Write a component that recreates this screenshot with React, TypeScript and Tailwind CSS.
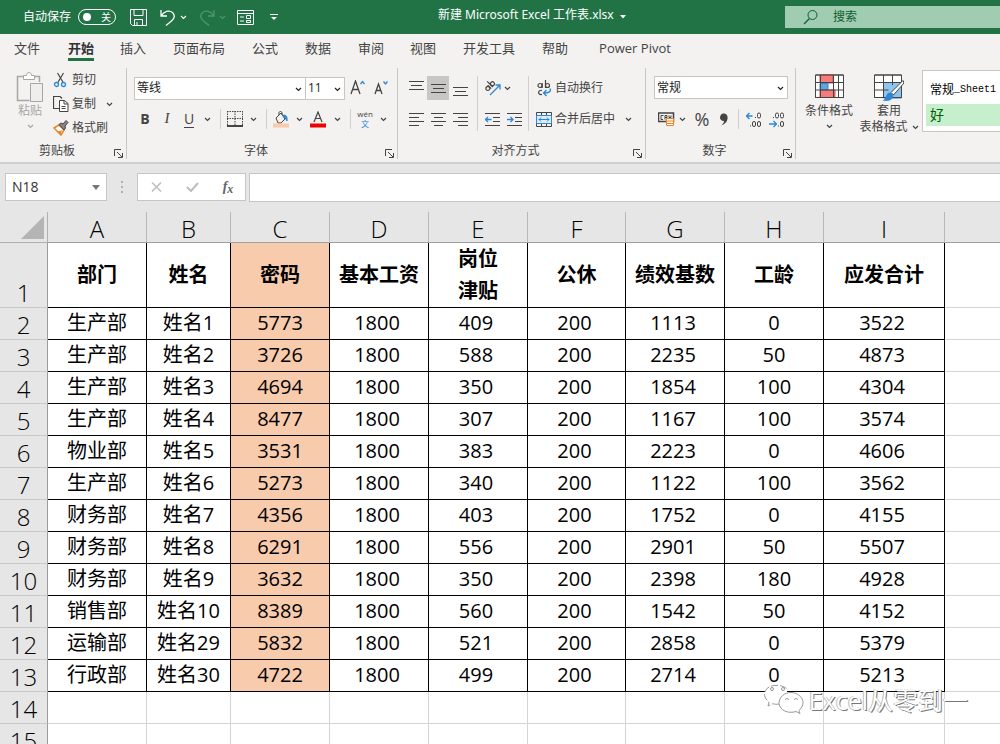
import clsx from 'clsx';
import type { ReactNode } from 'react';

interface Column {
  id: string;
  title: string[];
  width: string;
  align?: string;
}

const columns: Column[] = [
  { id: 'A', title: ['部门'], width: 'w-[99px]' },
  { id: 'B', title: ['姓名'], width: 'w-[84px]' },
  { id: 'C', title: ['密码'], width: 'w-[99px]' },
  { id: 'D', title: ['基本工资'], width: 'w-[99px]', align: 'pr-1' },
  { id: 'E', title: ['岗位', '津贴'], width: 'w-[99px]', align: 'pr-1' },
  { id: 'F', title: ['公休'], width: 'w-[98px]', align: 'pr-1' },
  { id: 'G', title: ['绩效基数'], width: 'w-[99px]', align: 'pr-1' },
  { id: 'H', title: ['工龄'], width: 'w-[99px]' },
  { id: 'I', title: ['应发合计'], width: 'w-[121px]', align: 'pr-1' },
];

const rows: string[][] = [
  ['生产部', '姓名1', '5773', '1800', '409', '200', '1113', '0', '3522'],
  ['生产部', '姓名2', '3726', '1800', '588', '200', '2235', '50', '4873'],
  ['生产部', '姓名3', '4694', '1800', '350', '200', '1854', '100', '4304'],
  ['生产部', '姓名4', '8477', '1800', '307', '200', '1167', '100', '3574'],
  ['物业部', '姓名5', '3531', '1800', '383', '200', '2223', '0', '4606'],
  ['生产部', '姓名6', '5273', '1800', '340', '200', '1122', '100', '3562'],
  ['财务部', '姓名7', '4356', '1800', '403', '200', '1752', '0', '4155'],
  ['财务部', '姓名8', '6291', '1800', '556', '200', '2901', '50', '5507'],
  ['财务部', '姓名9', '3632', '1800', '350', '200', '2398', '180', '4928'],
  ['销售部', '姓名10', '8389', '1800', '560', '200', '1542', '50', '4152'],
  ['运输部', '姓名29', '5832', '1800', '521', '200', '2858', '0', '5379'],
  ['行政部', '姓名30', '4722', '1800', '499', '200', '2714', '0', '5213'],
];

const tabs = [
  { label: '文件', width: 'w-[54px]' },
  { label: '开始', width: 'w-[54px]' },
  { label: '插入', width: 'w-[50px]' },
  { label: '页面布局', width: 'w-[82px]' },
  { label: '公式', width: 'w-[50px]' },
  { label: '数据', width: 'w-[56px]' },
  { label: '审阅', width: 'w-[50px]' },
  { label: '视图', width: 'w-[54px]' },
  { label: '开发工具', width: 'w-[78px]' },
  { label: '帮助', width: 'w-[54px]' },
  { label: 'Power Pivot', width: 'w-[106px]' },
];

function Icon({
  w,
  h,
  className,
  children,
}: {
  w: number;
  h: number;
  className?: string;
  children: ReactNode;
}) {
  return (
    <svg
      width={w}
      height={h}
      viewBox={`0 0 ${w} ${h}`}
      fill="none"
      stroke="currentColor"
      className={clsx('shrink-0', className)}
      aria-hidden="true"
    >
      {children}
    </svg>
  );
}

function Chevron({ className }: { className?: string }) {
  return (
    <Icon w={7} h={5} className={className}>
      <path d="M1 1l2.5 2.5L6 1" strokeWidth="1.2" />
    </Icon>
  );
}

function Tool({
  label,
  width,
  className,
  children,
}: {
  label: string;
  width: string;
  className?: string;
  children: ReactNode;
}) {
  return (
    <button
      type="button"
      aria-label={label}
      className={clsx(
        'flex h-6 shrink-0 items-center justify-center',
        width,
        className,
      )}
    >
      {children}
    </button>
  );
}

function More({ width = 'w-3' }: { width?: string }) {
  return (
    <Tool label="更多选项" width={width}>
      <Chevron />
    </Tool>
  );
}

function Divider() {
  return <span className="h-5 w-px shrink-0 bg-[#d2d0ce]" />;
}

function Group({
  label,
  width,
  children,
}: {
  label: string;
  width: string;
  children: ReactNode;
}) {
  return (
    <section
      aria-label={label}
      className={clsx(
        'flex shrink-0 flex-col border-r border-[#c8c6c4]',
        width,
      )}
    >
      <div className="flex-1">{children}</div>
      <div className="flex h-4 items-center pr-[3px]">
        <span className="flex-1 text-center leading-4">{label}</span>
        <button type="button" aria-label={`${label}设置`} className="pt-1">
          <Icon w={9} h={9}>
            <path d="M.5 7V.5H7M3 3l5 5M8.5 4v4.500H4" />
          </Icon>
        </button>
      </div>
    </section>
  );
}

function Combo({
  label,
  value,
  width,
}: {
  label: string;
  value: string;
  width: string;
}) {
  return (
    <label
      className={clsx(
        'relative flex h-[23px] shrink-0 border border-[#c8c6c4] bg-white text-[#222]',
        width,
      )}
    >
      <span className="sr-only">{label}</span>
      <select
        defaultValue={value}
        className="h-full w-full appearance-none bg-transparent pl-[2px] leading-5 outline-none"
      >
        <option>{value}</option>
      </select>
      <Chevron className="pointer-events-none absolute right-[3px] top-[9px]" />
    </label>
  );
}

function TitleBar() {
  return (
    <header className="flex h-[34px] shrink-0 items-center bg-[#217346] text-xs text-white">
      <div className="flex w-[438px] shrink-0 items-center pl-[23px]">
        <label htmlFor="autosave" className="leading-4">
          自动保存
        </label>
        <button
          id="autosave"
          type="button"
          role="switch"
          aria-checked="false"
          className="ml-[7px] flex h-4 w-[38px] items-center justify-between rounded-full border border-white px-1"
        >
          <span className="size-2 rounded-full bg-white" />
          <span className="text-[10px] leading-[14px]">关</span>
        </button>
        <button type="button" aria-label="保存" className="ml-[14px]">
          <Icon w={17} h={17}>
            <path d="M.5.500h16v16h-14l-2-2zM4 .5v6h9v-6M4.500 16.500v-6h8v6M7 16v-3" />
          </Icon>
        </button>
        <button type="button" aria-label="撤消" className="ml-[13px]">
          <Icon w={16} h={17}>
            <path
              d="M1 1v6h6M1.300 6.700C4 2.500 9 .5 12.500 3.500c3 3 2 6-1 8.500L6 16.500"
              strokeWidth="1.300"
            />
          </Icon>
        </button>
        <Chevron className="ml-1" />
        <button
          type="button"
          aria-label="恢复"
          className="ml-3 text-[#4f9570]"
        >
          <Icon w={16} h={17}>
            <path
              d="M15 1v6H9M14.700 6.700C12 2.500 7 .5 3.500 3.500c-3 3-2 6 1 8.500L10 16.500"
              strokeWidth="1.300"
            />
          </Icon>
        </button>
        <Chevron className="ml-1 text-[#4f9570]" />
        <button type="button" aria-label="窗体" className="ml-[11px]">
          <Icon w={17} h={15}>
            <path d="M.5.500h16v14H.5zM.5 3.500h16M3 7h4M3 11h4M9.500 5.500h4v3h-4zM9.500 10.500h4v2h-4z" />
          </Icon>
        </button>
        <button type="button" aria-label="自定义工具栏" className="ml-4">
          <Icon w={8} h={7}>
            <path d="M0 .500h8" />
            <path d="M1 3h6L4 6z" fill="currentColor" stroke="none" />
          </Icon>
        </button>
      </div>
      <h1 className="pb-1 font-['Noto_Sans','Noto_Sans_CJK_SC',sans-serif] font-normal leading-5">
        新建 Microsoft Excel 工作表.xlsx
      </h1>
      <Icon w={6} h={4} className="ml-[6px]">
        <path d="M0 0h6L3 3.500z" fill="currentColor" stroke="none" />
      </Icon>
      <label className="ml-auto flex h-[22px] w-[215px] shrink-0 items-center bg-[#a0cdb2] pl-[18px] text-[#0e5c2f]">
        <Icon w={16} h={16}>
          <circle cx="9.500" cy="6" r="4.500" />
          <path d="M6.500 9.500L1 15" strokeWidth="1.200" />
        </Icon>
        <input
          type="search"
          aria-label="搜索"
          placeholder="搜索"
          className="ml-[14px] w-24 bg-transparent outline-none placeholder:text-[#0e5c2f]"
        />
      </label>
    </header>
  );
}

function TabBar() {
  return (
    <nav className="flex h-[30px] shrink-0 text-[13px] text-[#444]">
      {tabs.map((tab) => {
        const active = tab.label === '开始';
        return (
          <button
            key={tab.label}
            type="button"
            className={clsx(
              'flex shrink-0 flex-col items-center pt-1',
              tab.width,
              active && 'font-bold text-[#333]',
            )}
          >
            <span
              className={clsx(
                'border-b-3 leading-5',
                active ? 'border-[#217346]' : 'border-transparent',
              )}
            >
              {tab.label}
            </span>
          </button>
        );
      })}
    </nav>
  );
}

function ClipboardGroup() {
  return (
    <Group label="剪贴板" width="w-[127px]">
      <div className="flex pl-[14px]">
        <button
          type="button"
          className="flex w-8 flex-col items-center pt-1 text-[#a6a6a6]"
        >
          <Icon w={28} h={31}>
            <path d="M8 4.500H1.500v24h12M19 4.500h4.500V10" strokeWidth="1.500" />
            <path d="M7.500 7.500v-4h3c0-4 5-4 5 0h3v4z" fill="#fff" />
            <path d="M14.500 11.500h12v18h-12z" fill="#eee" />
          </Icon>
          <span className="leading-4">粘贴</span>
          <Chevron className="mt-[5px]" />
        </button>
        <div className="ml-[7px] text-[#444]">
          <button type="button" className="flex h-6 items-center">
            <Icon w={16} h={16}>
              <path d="M4.500 1l6 10M10.500 1l-6 10" strokeWidth="1.200" />
              <circle cx="3.500" cy="12.500" r="2" stroke="#2b88d8" strokeWidth="1.300" />
              <circle cx="10.500" cy="12.500" r="2" stroke="#2b88d8" strokeWidth="1.300" />
            </Icon>
            <span className="ml-[3px]">剪切</span>
          </button>
          <div className="flex">
            <button type="button" className="flex h-6 items-center">
              <Icon w={16} h={16}>
                <path d="M6 12.500H.5v-12H7l2 2" strokeWidth="1.200" />
                <path
                  d="M6.500 4.500h5l3.500 3v8H6.500zM11 4.500V8h4M8.500 10.500h4M8.500 12.500h4"
                  fill="#fff"
                />
              </Icon>
              <span className="ml-[3px]">复制</span>
            </button>
            <div className="pl-[7px]">
              <More />
            </div>
          </div>
          <button type="button" className="flex h-6 items-center">
            <Icon w={16} h={16}>
              <path d="M1 8l5-3 5 5-3 5z" fill="#fff" stroke="#e8842a" strokeWidth="1.500" />
              <path d="M4 12l5-2-1.500 4.500z" fill="#e8842a" stroke="none" />
              <path d="M6 4.500L8 3l2 1 3-3.500 2 2L12 6l.5 2-1.500 2z" fill="#8a8886" />
            </Icon>
            <span className="ml-[3px]">格式刷</span>
          </button>
        </div>
      </div>
    </Group>
  );
}

function FontGroup() {
  return (
    <Group label="字体" width="w-[271px]">
      <div className="flex items-center pl-[7px] pt-2">
        <Combo label="字体名称" value="等线" width="w-[172px]" />
        <Combo label="字号" value="11" width="-ml-px w-10" />
        <Tool label="增大字号" width="w-6">
          <Icon w={15} h={16}>
            <path d="M1 14L5.500 1 10 14M2.500 9.500h6" strokeWidth="1.300" />
            <path d="M10.500 4L12.500 1.500 14.500 4" stroke="#2b88d8" strokeWidth="1.300" />
          </Icon>
        </Tool>
        <Tool label="减小字号" width="w-6">
          <Icon w={14} h={16}>
            <path d="M1 14L4.500 4 8 14M2 10.500h5" strokeWidth="1.300" />
            <path d="M9.500 1.500l2 2.500 2-2.500" stroke="#2b88d8" strokeWidth="1.300" />
          </Icon>
        </Tool>
      </div>
      <div className="flex items-center pl-[7px] pt-[7px]">
        <Tool label="加粗" width="w-[22px]" className="text-sm font-bold">
          B
        </Tool>
        <Tool
          label="倾斜"
          width="w-[22px]"
          className="font-['Liberation_Serif'] text-[15px] italic"
        >
          I
        </Tool>
        <Tool label="下划线" width="w-[22px]" className="text-sm">
          <span className="border-b border-[#444] leading-4">U</span>
        </Tool>
        <More width="w-[14px]" />
        <span className="w-[6px]" />
        <Divider />
        <Tool label="边框" width="w-7">
          <Icon w={16} h={16}>
            <path d="M.5 0v15M8 0v15M15.500 0v15M0 .500h16M0 7.500h16" strokeDasharray="1.500 1" />
            <path d="M0 15h16" strokeWidth="2" />
          </Icon>
        </Tool>
        <More width="w-2" />
        <span className="w-[9px]" />
        <Divider />
        <Tool label="填充颜色" width="w-7">
          <Icon w={16} h={17}>
            <path d="M3 7l5-5 4 6-4 4H5zM6 4V1.500c1-2 3-1 3 .5v2" />
            <path d="M10.500 4c3 0 4 2 3.500 6-1-1-1-3-3.500-4z" fill="#2b88d8" stroke="#2b88d8" />
            <path d="M0 14.500h16" stroke="#f8cbad" strokeWidth="4" />
          </Icon>
        </Tool>
        <More width="w-2" />
        <Tool label="字体颜色" width="w-[30px]">
          <Icon w={16} h={17}>
            <path d="M4 11L8 1l4 10M5.500 7.500h5" strokeWidth="1.200" />
            <path d="M0 14.500h16" stroke="#f00000" strokeWidth="4" />
          </Icon>
        </Tool>
        <More width="w-2" />
        <span className="w-[9px]" />
        <Divider />
        <Tool label="拼音指南" width="w-7" className="flex-col">
          <span className="text-[8px] leading-[10px]">wén</span>
          <span className="text-[8px] leading-[10px] text-[#2b88d8]">文</span>
        </Tool>
        <More width="w-2" />
      </div>
    </Group>
  );
}

function Lines({ d }: { d: string }) {
  return (
    <Icon w={15} h={15}>
      <path d={d} strokeWidth="1.100" />
    </Icon>
  );
}

function AlignmentGroup() {
  return (
    <Group label="对齐方式" width="w-[248px]">
      <div className="flex pl-[7px] pt-2">
        <div className="w-[72px]">
          <div className="flex">
            <Tool label="顶端对齐" width="w-[22px]">
              <Lines d="M0 .500h15M2 4.500h11M0 8.500h15" />
            </Tool>
            <Tool label="垂直居中" width="w-[22px]" className="bg-[#c8c6c4]">
              <Lines d="M0 3.500h15M2 7.500h11M0 11.500h15" />
            </Tool>
            <Tool label="底端对齐" width="w-[22px]">
              <Lines d="M0 6.500h15M2 10.500h11M0 14.500h15" />
            </Tool>
          </div>
          <div className="flex pt-[7px]">
            <Tool label="左对齐" width="w-[22px]">
              <Lines d="M0 1.500h15M0 5.500h10M0 9.500h15M0 13.500h10" />
            </Tool>
            <Tool label="居中" width="w-[22px]">
              <Lines d="M0 1.500h15M3 5.500h9M0 9.500h15M3 13.500h9" />
            </Tool>
            <Tool label="右对齐" width="w-[22px]">
              <Lines d="M0 1.500h15M5 5.500h10M0 9.500h15M5 13.500h10" />
            </Tool>
          </div>
        </div>
        <div className="flex w-[52px] flex-col border-x border-[#d2d0ce] pl-[3px]">
          <div className="flex">
            <Tool label="方向" width="w-[22px]">
              <Icon w={17} h={16}>
                <g strokeWidth="1.200" transform="rotate(-45 6 7)">
                  <circle cx="3.500" cy="6.500" r="2" />
                  <path d="M5.700 4v5M8 1v8" />
                  <circle cx="10" cy="6.500" r="2" />
                </g>
                <path d="M6 15l9.500-9.500M11.500 5H16v4.500" stroke="#2b88d8" strokeWidth="1.300" />
              </Icon>
            </Tool>
            <More width="w-2" />
          </div>
          <div className="flex pt-[7px]">
            <Tool label="减少缩进量" width="w-[22px]">
              <Icon w={15} h={15}>
                <path d="M0 1.500h15M8 5.500h7M8 9.500h7M0 13.500h15" strokeWidth="1.100" />
                <path d="M6.500 7.500h-6M3 5L.5 7.500 3 10" stroke="#2b88d8" strokeWidth="1.300" />
              </Icon>
            </Tool>
            <Tool label="增加缩进量" width="w-[22px]">
              <Icon w={15} h={15}>
                <path d="M0 1.500h15M8 5.500h7M8 9.500h7M0 13.500h15" strokeWidth="1.100" />
                <path d="M0 7.500h6M3.500 5L6 7.500 3.500 10" stroke="#2b88d8" strokeWidth="1.300" />
              </Icon>
            </Tool>
          </div>
        </div>
        <div className="pl-[7px]">
          <button type="button" className="flex h-6 items-center">
            <Icon w={16} h={17}>
              <g strokeWidth="1.200">
                <circle cx="4" cy="5.500" r="2" />
                <path d="M6.200 3v5M9.500 0v8" />
                <circle cx="11.500" cy="5.500" r="2" />
                <path d="M6 10.500c-4-1.500-5 5 0 4" />
              </g>
              <path d="M14 8.500c1.500 3-1 4.500-6 4.500M10.500 10L7.500 13l3 3" stroke="#2b88d8" strokeWidth="1.300" />
            </Icon>
            <span className="ml-[3px]">自动换行</span>
          </button>
          <div className="flex pt-[7px]">
            <button type="button" className="flex h-6 items-center">
              <Icon w={16} h={15}>
                <path d="M.5.500h15v14H.5zM5.500.500v3M10.500.500v3M5.500 11.500v3M10.500 11.500v3" />
                <path
                  d="M.5 3.500h15v8H.5z"
                  fill="#deecf9"
                  stroke="#2b88d8"
                />
                <path d="M3 7.500h10M5 5.500l-2 2 2 2M11 5.500l2 2-2 2" stroke="#2b88d8" />
              </Icon>
              <span className="ml-[3px]">合并后居中</span>
            </button>
            <div className="pl-[7px]">
              <More />
            </div>
          </div>
        </div>
      </div>
    </Group>
  );
}

function NumberGroup() {
  return (
    <Group label="数字" width="w-[150px]">
      <div className="flex pl-2 pt-2">
        <Combo label="数字格式" value="常规" width="w-[134px]" />
      </div>
      <div className="flex items-center pl-2 pt-2">
        <Tool label="会计数字格式" width="w-6">
          <Icon w={17} h={14}>
            <path d="M.5 1h15v8.500H.5z" strokeWidth="1.500" />
            <path d="M5.500 3.500H3v4h2M7 7.500v-4h2v2H7M11 3.500v2h2v-2" />
            <path d="M8.500 6.500h7v7h-7zM8.500 9h7M8.500 11.500h7" fill="#fff" stroke="#e8842a" />
          </Icon>
        </Tool>
        <More width="w-2" />
        <Tool label="百分比样式" width="w-8" className="text-lg">
          %
        </Tool>
        <Tool label="千位分隔样式" width="w-3">
          <Icon w={10} h={13}>
            <path
              d="M4.500.500C8 .5 9 3 8.500 6 8 9 5.500 11.500 2 12.500c2-1.500 3-3 3-4.500C2.500 8 1 6.500 1 4.500S2.500.5 4.500.5z"
              fill="currentColor"
              stroke="none"
            />
          </Icon>
        </Tool>
        <span className="w-2" />
        <Divider />
        <Tool label="增加小数位数" width="w-[30px]" className="pt-px">
          <Icon w={16} h={16}>
            <path d="M6.500 4H.5M3.500 1l-3 3 3 3" stroke="#2b88d8" strokeWidth="1.300" />
            <rect x="11.500" y="1" width="3" height="5" rx="1.500" />
            <rect x="6.500" y="9.500" width="3" height="5" rx="1.500" />
            <rect x="11.500" y="9.500" width="3" height="5" rx="1.500" />
            <path d="M9 5.500h1M4 14h1" />
          </Icon>
        </Tool>
        <Tool label="减少小数位数" width="w-4" className="pt-px">
          <Icon w={16} h={16}>
            <path d="M0 12h7M4.500 9l3 3-3 3" stroke="#2b88d8" strokeWidth="1.300" />
            <rect x="6.500" y="1" width="3" height="5" rx="1.500" />
            <rect x="11.500" y="1" width="3" height="5" rx="1.500" />
            <rect x="11.500" y="9.500" width="3" height="5" rx="1.500" />
            <path d="M4 5.500h1M9 14h1" />
          </Icon>
        </Tool>
      </div>
    </Group>
  );
}

function StylesGroup() {
  return (
    <section aria-label="样式" className="flex min-w-0 flex-1 items-start pl-[3px]">
      <button
        type="button"
        className="flex w-[60px] shrink-0 flex-col items-center pt-[6px]"
      >
        <Icon w={29} h={25}>
          <path d="M.5 1h28v22.500H.5z" fill="#fff" />
          <path d="M5 1h13v8H5zM5 16h15v7.500H5z" fill="#f77b7b" stroke="#e04848" />
          <path d="M5 9.500h8v6H5z" fill="#5ea6dd" stroke="#2b88d8" />
          <path d="M.5 8.500h28M.5 16h28M5.500 1v22.500M18.500 1v22.500M23.500 1v22.500M.5 1h28v22.500H.5z" />
        </Icon>
        <span className="pt-1 leading-4">条件格式</span>
        <Chevron className="mt-[5px]" />
      </button>
      <button
        type="button"
        className="flex w-[60px] shrink-0 flex-col items-center pt-[6px]"
      >
        <Icon w={30} h={28}>
          <path d="M.5 1h27v22.500H.5z" fill="#fff" />
          <path d="M9.500 8.500h18V24h-18z" fill="#8ec5ee" stroke="#2b88d8" />
          <path d="M.5 8.500h27M.5 16h14M9.500 1v22.500M18.500 1v10M.5 1h27v22.500H.5z" />
          <path d="M29 6.500L17 18.500l2.500 2.500L30 9z" fill="#fff" />
          <path d="M16.500 18.500c-3 0-4 2-4.500 4.500-1 2-2 3-3.500 3.500 5 1 10 .5 11-5z" fill="#2b88d8" stroke="none" />
        </Icon>
        <span className="pt-px leading-4">套用</span>
        <span className="flex items-center whitespace-nowrap leading-4">
          表格格式
          <Chevron className="ml-1" />
        </span>
      </button>
      <div className="ml-[3px] mt-0.5 flex h-[62px] min-w-0 flex-1 flex-col border border-r-0 border-[#c8c6c4] bg-white pl-[3px] pt-1">
        <button
          type="button"
          className="flex h-[29px] items-center whitespace-nowrap pl-1 text-black"
        >
          常规
          <span className="font-['Liberation_Mono',monospace] text-[10px]">
            _Sheet1
          </span>
        </button>
        <button
          type="button"
          className="flex h-[22px] items-center bg-[#c6efce] pl-1 text-sm text-[#006100]"
        >
          好
        </button>
      </div>
    </section>
  );
}

function FormulaBar() {
  return (
    <div className="flex h-[50px] shrink-0 items-center border-t-2 border-[#d0d0d0] bg-[#e6e6e6] pb-0.5 pl-[5px]">
      <div className="flex h-7 w-[102px] shrink-0 items-center border border-[#c6c6c6] bg-white">
        <input
          aria-label="名称框"
          defaultValue="N18"
          className="w-20 bg-transparent pl-[6px] text-sm text-[#333] outline-none"
        />
        <button type="button" aria-label="展开名称框" className="ml-[6px]">
          <Icon w={8} h={5}>
            <path d="M0 0h8L4 5z" fill="#777" stroke="none" />
          </Icon>
        </button>
      </div>
      <span className="flex w-[30px] shrink-0 justify-center">
        <Icon w={2} h={12}>
          <path d="M1 0v12" stroke="#b0b0b0" strokeWidth="2" strokeDasharray="2 3" />
        </Icon>
      </span>
      <div className="flex h-7 w-[109px] shrink-0 items-center border border-[#c6c6c6] bg-white">
        <Tool label="取消" width="w-9" className="text-[#bdbdbd]">
          <Icon w={11} h={10}>
            <path d="M1 .5l9 9M10 .5l-9 9" strokeWidth="1.500" />
          </Icon>
        </Tool>
        <Tool label="输入" width="w-9" className="text-[#bdbdbd]">
          <Icon w={13} h={10}>
            <path d="M1 5l4 4 7-8" strokeWidth="2" />
          </Icon>
        </Tool>
        <Tool
          label="插入函数"
          width="w-9"
          className="font-['Liberation_Serif'] text-sm font-bold italic text-[#666]"
        >
          f<span className="pt-1 text-xs">x</span>
        </Tool>
      </div>
      <input
        aria-label="编辑栏"
        className="ml-[3px] h-[29px] min-w-0 flex-1 border border-r-0 border-[#c6c6c6] bg-white px-2 text-sm outline-none"
      />
    </div>
  );
}

const rowHead =
  'border-b border-r border-b-[#c9c9c9] border-r-[#9b9b9b] bg-[#e6e6e6] p-0 text-center align-bottom text-2xl leading-7 font-light text-black';

function Sheet() {
  return (
    <main className="relative min-h-0 flex-1 overflow-hidden bg-white">
      <table className="w-full table-fixed border-separate border-spacing-0 text-black">
        <colgroup>
          <col className="w-12" />
          {columns.map((col) => (
            <col key={col.id} className={col.width} />
          ))}
          <col />
        </colgroup>
        <thead>
          <tr className="h-[31px] bg-[#e6e6e6]">
            <td className="border-b border-r border-[#b0b0b0] p-0">
              <button
                type="button"
                aria-label="全选"
                className="flex w-full justify-end pr-[3px]"
              >
                <Icon w={23} h={23}>
                  <path d="M23 0v23H0z" fill="#b4b4b4" stroke="none" />
                </Icon>
              </button>
            </td>
            {columns.map((col) => (
              <th
                key={col.id}
                scope="col"
                className="border-b border-r border-b-[#a0a0a0] border-r-[#b8b8b8] p-0 pt-1 text-2xl leading-6 font-light text-black"
              >
                {col.id}
              </th>
            ))}
            <td className="border-b border-[#a0a0a0] p-0" />
          </tr>
        </thead>
        <tbody>
          <tr className="h-[65px]">
            <th scope="row" className={rowHead}>
              1
            </th>
            {columns.map((col) => (
              <td
                key={col.id}
                className={clsx(
                  'whitespace-nowrap border-b border-r border-black p-0 text-center text-xl leading-8 font-bold',
                  col.id === 'C' && 'bg-[#f8cbad]',
                )}
              >
                {col.title.map((line) => (
                  <div key={line}>{line}</div>
                ))}
              </td>
            ))}
            <td className="border-b border-[#d4d4d4]" />
          </tr>
          {rows.map((cells, r) => (
            <tr key={cells[1]} className="h-8">
              <th scope="row" className={rowHead}>
                {r + 2}
              </th>
              {cells.map((cell, c) => (
                <td
                  key={columns[c].id}
                  className={clsx(
                    'whitespace-nowrap border-b border-r border-black p-0 pb-0.5 text-center text-xl leading-7',
                    columns[c].align,
                    columns[c].id === 'C' && 'bg-[#f8cbad]',
                  )}
                >
                  {cell}
                </td>
              ))}
              <td className="border-b border-[#d4d4d4]" />
            </tr>
          ))}
          {[14, 15].map((n) => (
            <tr key={n} className="h-8">
              <th scope="row" className={rowHead}>
                {n}
              </th>
              {columns.map((col) => (
                <td key={col.id} className="border-b border-r border-[#d4d4d4]" />
              ))}
              <td className="border-b border-[#d4d4d4]" />
            </tr>
          ))}
        </tbody>
      </table>
      <div className="pointer-events-none absolute bottom-6 right-8 flex items-center gap-1 text-[25px] leading-10 text-white">
        <Icon w={42} h={32} className="text-[#999]">
          <path
            d="M16 20c-2 .5-4 .3-6-.3L5 22l1-4C1 14 0 9 4 4.500 9 0 20 0 25 6"
            fill="#fff"
            strokeDasharray="7 2"
          />
          <circle cx="9" cy="5" r="1.500" />
          <circle cx="20" cy="5" r="1.500" />
          <path
            d="M36 26.500l1 3-4-2c-8 2.500-16-1-17-8 0-7 6-11 12-11s12 4.500 12 10c0 3.500-2 6-4 8z"
            fill="#fff"
          />
          <path d="M22 15.500l2-1 2 1M31 15.500l2-1 2 1" />
        </Icon>
        <span className="[text-shadow:1px_1px_0_#777,-1px_0_0_#bbb]">
          Excel从零到一
        </span>
      </div>
    </main>
  );
}

export default function App() {
  return (
    <div className="flex h-screen flex-col overflow-hidden bg-[#f3f2f1] font-['Open_Sans','Noto_Sans_CJK_SC',sans-serif]">
      <TitleBar />
      <TabBar />
      <div className="flex h-[98px] shrink-0 pb-[3px] pt-1 text-xs text-[#444]">
        <ClipboardGroup />
        <FontGroup />
        <AlignmentGroup />
        <NumberGroup />
        <StylesGroup />
      </div>
      <FormulaBar />
      <Sheet />
    </div>
  );
}
